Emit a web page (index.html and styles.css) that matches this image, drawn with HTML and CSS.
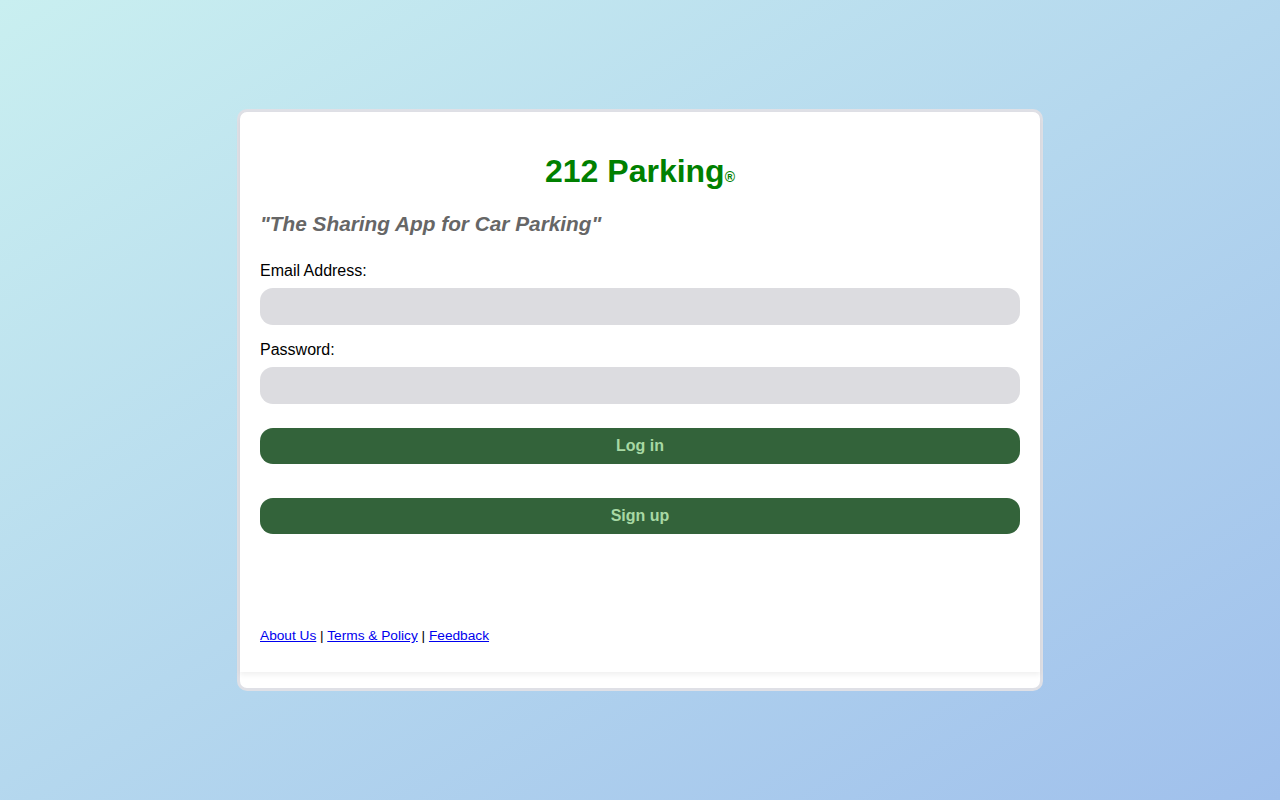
FILE: index.html
```html
<!DOCTYPE html>
<html lang="en">
<head>
<meta charset="utf-8">
<title>212 Parking</title>
<link rel="stylesheet" href="styles.css">
</head>
<body>
<div class="page">
  <div class="card">
    <div class="inner">
      <h1 class="title">212 Parking<span class="reg">®</span></h1>
      <h2 class="tagline">"The Sharing App for Car Parking"</h2>
      <label class="label">Email Address:</label>
      <div class="field"></div>
      <label class="label label-pw">Password:</label>
      <div class="field"></div>
      <div class="btn btn-login">Log in</div>
      <div class="btn btn-signup">Sign up</div>
      <div class="footer">
        <a href="#">About Us</a> | <a href="#">Terms &amp; Policy</a> | <a href="#">Feedback</a>
      </div>
    </div>
  </div>
</div>
</body>
</html>
```
FILE: styles.css
```css
html, body {
  margin: 0;
  padding: 0;
  height: 100%;
}
body {
  font-family: "Liberation Sans", Arial, sans-serif;
  background: linear-gradient(to bottom right, #c9eff0, #a0c0ec);
}
.page {
  height: 800px;
  display: flex;
  justify-content: center;
  padding-top: 109px;
  box-sizing: border-box;
}
.card {
  width: 806px;
  height: 582px;
  box-sizing: border-box;
  border: 3px solid #dfe0e6;
  border-radius: 10px;
  background: #fff;
  padding-bottom: 16px;
  display: flex;
  flex-direction: column;
}
.inner {
  flex: 1;
  padding: 0 20px;
  display: flex;
  flex-direction: column;
  box-shadow: 0 3px 5px rgba(0, 0, 0, 0.06);
  border-radius: 7px 7px 0 0;
}
.title {
  margin: 41px 0 0;
  font-size: 32px;
  font-weight: bold;
  color: #008000;
  text-align: center;
  line-height: 37px;
}
.reg {
  font-size: 14px;
  font-weight: bold;
}
.tagline {
  margin: 16px 0 0;
  font-size: 20.8px;
  font-style: italic;
  font-weight: bold;
  color: #666666;
  line-height: 23px;
}
.label {
  display: block;
  margin-top: 27px;
  font-size: 16px;
  line-height: 18px;
  color: #000;
}
.label-pw {
  margin-top: 16px;
}
.field {
  margin-top: 8px;
  height: 37px;
  background: #dcdce0;
  border-radius: 13px;
}
.btn {
  height: 36px;
  border-radius: 13px;
  background: #33633a;
  color: #a8d9a4;
  font-weight: bold;
  font-size: 16px;
  display: flex;
  align-items: center;
  justify-content: center;
}
.btn-login {
  margin-top: 24px;
}
.btn-signup {
  margin-top: 34px;
}
.footer {
  margin-top: 94px;
  font-size: 13.7px;
  line-height: 16px;
  color: #000;
}
.footer a {
  color: #0000ee;
}
```
